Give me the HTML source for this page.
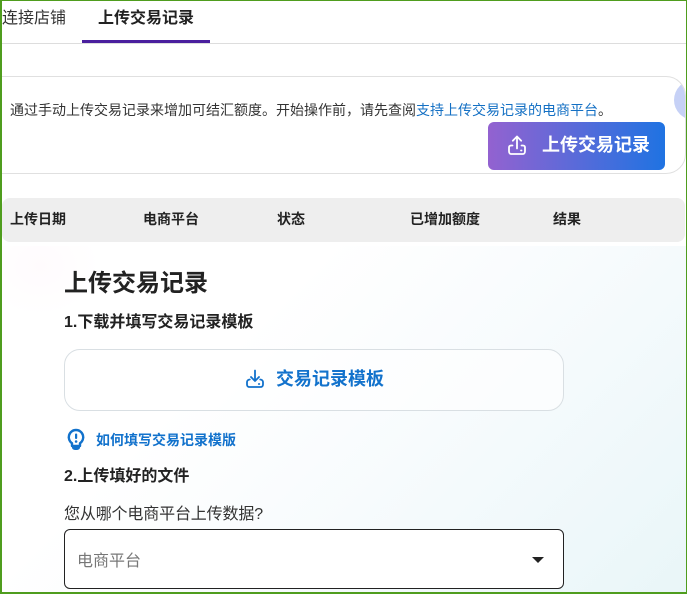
<!DOCTYPE html>
<html lang="zh-CN">
<head>
<meta charset="utf-8">
<style>
html,body{margin:0;padding:0;background:#fff}
body{width:687px;height:594px;position:relative;overflow:hidden;font-family:"Liberation Sans","Noto Sans CJK SC",sans-serif;color:#222}
.a{position:absolute;white-space:nowrap}
.b{font-weight:700}
</style>
</head>
<body>
<div class="a" style="left:0;top:246px;width:687px;height:348px;background:radial-gradient(ellipse 60px 50px at 40px 20px,#fffbfd 0%,rgba(255,251,253,0) 100%),linear-gradient(135deg,#fff 32%,#f7fbfd 60%,#e9f6f8 100%)"></div>

<div class="a" style="left:2px;top:11px;font-size:16px;line-height:16px;color:#333">连接店铺</div>
<div class="a b" style="left:98px;top:11px;font-size:16px;line-height:16px;color:#222">上传交易记录</div>
<div class="a" style="left:82px;top:40px;width:128px;height:3px;background:#4a1f9e"></div>
<div class="a" style="left:0;top:43px;width:687px;height:1px;background:#ddd"></div>

<div class="a" style="left:-20px;top:76px;width:704px;height:96px;border:1px solid #e0e0e0;border-radius:20px;overflow:hidden;background:#fff">
  <div class="a" style="left:693px;top:3px;width:40px;height:40px;border-radius:50%;background:#c6d1f6"></div>
</div>
<div class="a" style="left:10px;top:103px;font-size:14px;line-height:15px;color:#333">通过手动上传交易记录来增加可结汇额度。开始操作前，请先查阅<span style="color:#1470c4">支持上传交易记录的电商平台</span>。</div>

<div class="a" style="left:488px;top:122px;width:177px;height:48px;border-radius:6px;background:linear-gradient(90deg,#9362d0,#1f73e2)"></div>
<svg class="a" style="left:506px;top:134px" width="22" height="22" viewBox="0 0 22 22" fill="none" stroke="#fff" stroke-width="1.800" stroke-linecap="round" stroke-linejoin="round"><path d="M11 14.500V2.500M6.800 6.700L11 2.500l4.200 4.200"/><path d="M6.500 11.500H5C3.800 11.500 3 12.300 3 13.500v3.500C3 18.700 3.800 20 5 20h12c1.200 0 2-1.300 2-3v-3.500c0-1.200-.8-2-2-2h-1.500"/><path d="M15 16.500h.5"/></svg>
<div class="a b" style="left:542px;top:135px;font-size:18px;line-height:20px;color:#fff">上传交易记录</div>

<div class="a" style="left:2px;top:198px;width:683px;height:44px;border-radius:8px;background:#eee"></div>
<div class="a b" style="left:10px;top:211px;font-size:14px;line-height:16px;color:#222">上传日期</div>
<div class="a b" style="left:143px;top:211px;font-size:14px;line-height:16px;color:#222">电商平台</div>
<div class="a b" style="left:277px;top:211px;font-size:14px;line-height:16px;color:#222">状态</div>
<div class="a b" style="left:410px;top:211px;font-size:14px;line-height:16px;color:#222">已增加额度</div>
<div class="a b" style="left:553px;top:211px;font-size:14px;line-height:16px;color:#222">结果</div>

<div class="a b" style="left:64px;top:270px;font-size:24px;line-height:28px;color:#222">上传交易记录</div>
<div class="a b" style="left:64px;top:313px;font-size:16px;line-height:19px;color:#222">1.下载并填写交易记录模板</div>

<div class="a" style="left:64px;top:349px;width:498px;height:60px;border:1px solid #d9dfe3;border-radius:16px;background:rgba(255,255,255,.6)"></div>
<svg class="a" style="left:245px;top:369px" width="20" height="20" viewBox="0 0 20 20" fill="none" stroke="#1272cc" stroke-width="1.800" stroke-linecap="round" stroke-linejoin="round"><path d="M10 1.500V12M6 8l4 4 4-4"/><path d="M4.800 10.500C3.500 10.500 2 11.500 2 13v2.500C2 17 3 18 4.500 18h11c1.500 0 2.500-1 2.500-2.500V13c0-1.500-1.500-2.500-2.800-2.500"/><path d="M13.800 15h.5"/></svg>
<div class="a b" style="left:276px;top:369px;font-size:18px;line-height:21px;color:#1272cc">交易记录模板</div>

<svg class="a" style="left:66px;top:428px" width="20" height="24" viewBox="0 0 20 24"><path d="M10 2a7.200 7.200 0 0 0-4 13.200V18h8v-2.800A7.200 7.200 0 0 0 10 2z" fill="#fff" stroke="#1272cc" stroke-width="2.400" stroke-linejoin="round"/><path d="M6 17h8v2.500c0 1.500-1.500 2.500-4 2.500s-4-1-4-2.500z" fill="#1272cc"/><rect x="9" y="5.500" width="2.200" height="5.500" rx="1" fill="#1272cc"/><circle cx="10.100" cy="13.500" r="1.300" fill="#1272cc"/></svg>
<div class="a b" style="left:96px;top:433px;font-size:14px;line-height:15px;color:#1272cc">如何填写交易记录模版</div>

<div class="a b" style="left:64px;top:467px;font-size:16px;line-height:19px;color:#222">2.上传填好的文件</div>
<div class="a" style="left:64px;top:505px;font-size:16px;line-height:19px;color:#333;letter-spacing:-.15px">您从哪个电商平台上传数据?</div>

<div class="a" style="left:64px;top:529px;width:498px;height:58px;border:1px solid #222;border-radius:6px;background:#fff"></div>
<div class="a" style="left:77px;top:553px;font-size:16px;line-height:18px;color:#777">电商平台</div>
<div class="a" style="left:532px;top:557px;width:0;height:0;border-left:6px solid transparent;border-right:6px solid transparent;border-top:6px solid #222"></div>

<div class="a" style="left:0;top:0;width:687px;height:1px;background:#4f9d1e"></div>
<div class="a" style="left:0;top:0;width:2px;height:594px;background:#4f9d1e"></div>
<div class="a" style="left:686px;top:0;width:1px;height:594px;background:#4f9d1e"></div>
<div class="a" style="left:0;top:592px;width:687px;height:2px;background:#4f9d1e"></div>
</body>
</html>
